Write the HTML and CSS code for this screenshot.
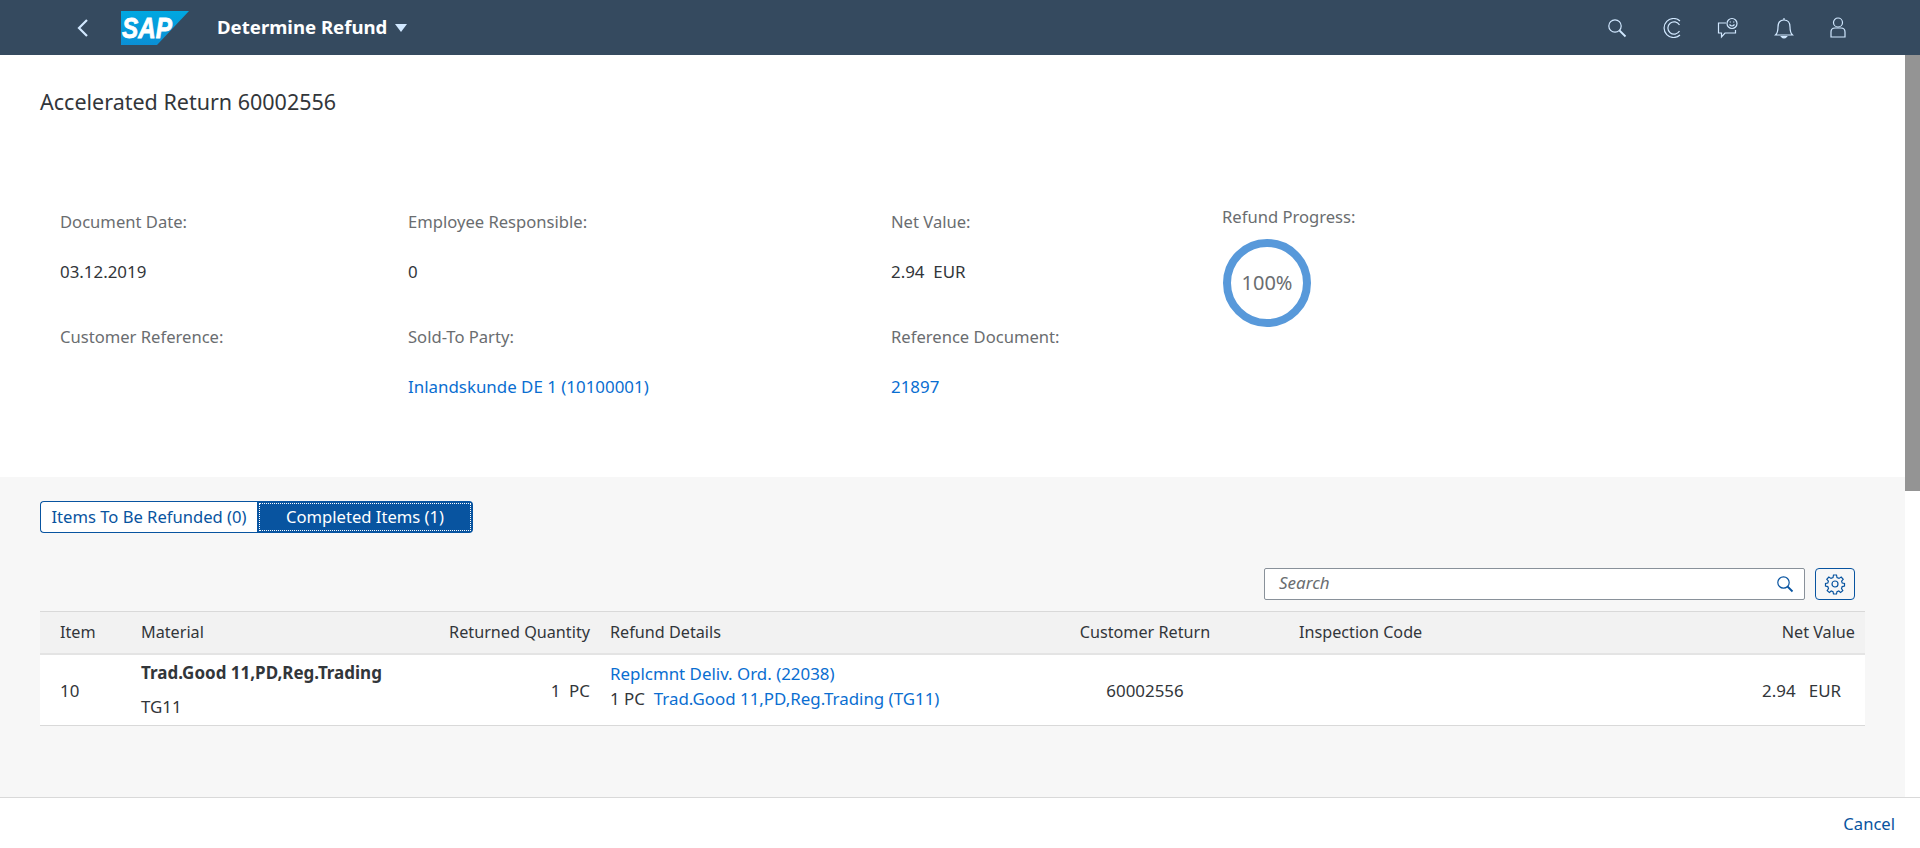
FILE: index.html
```html
<!DOCTYPE html>
<html lang="en">
<head>
    <meta charset="UTF-8">
    <meta name="viewport" content="width=device-width, initial-scale=1.0">
    <title>Determine Refund</title>
    <link rel="stylesheet" href="styles.css">
</head>
<body>

    <header class="shell">
        <button class="back" aria-label="Back">
            <svg width="14" height="20" viewBox="0 0 14 20"><path d="M12 2 L4 10 L12 18" fill="none" stroke="#d1e8ff" stroke-width="2.2"/></svg>
        </button>
        <svg class="logo" width="69" height="34" viewBox="0 0 69 34">
            <defs>
                <linearGradient id="sapBlue" x1="0" y1="0" x2="0" y2="1">
                    <stop offset="0" stop-color="#00a8e1"/>
                    <stop offset="1" stop-color="#0a8fd6"/>
                </linearGradient>
            </defs>
            <polygon points="0,0 68,0 36,34 0,34" fill="url(#sapBlue)"/>
            <text x="1" y="27" class="logo-text" textLength="50" lengthAdjust="spacingAndGlyphs">SAP</text>
        </svg>
        <div class="app-title">Determine Refund</div>
        <span class="title-arrow"></span>
        <div class="shell-icons">
            <svg width="20" height="20" viewBox="0 0 20 20" fill="none" stroke="#d1e8ff" stroke-width="1.2"><circle cx="8" cy="8" r="6.2"/><path d="M12.500 12.500 L18.500 18.500" stroke-width="1.800"/></svg>
            <svg width="20" height="20" viewBox="0 0 20 20" fill="none" stroke="#d1e8ff" stroke-width="1.2"><path d="M18 3 A9.500 9.500 0 1 0 18 17"/><path d="M17.500 7 A6.200 6.200 0 1 0 17.500 13"/></svg>
            <svg width="22" height="22" viewBox="0 0 22 22" fill="none" stroke="#d1e8ff" stroke-width="1.200"><path d="M9 6 H1.500 V16 H4.500 V20 L8 16 H18.500 V13"/><circle cx="15" cy="6.500" r="5"/><path d="M12.500 7.500 Q15 10.500 17.500 7.500"/><path d="M13.300 4.500 v1 M16.700 4.500 v1"/></svg>
            <svg width="20" height="22" viewBox="0 0 20 22" fill="none" stroke="#d1e8ff" stroke-width="1.200"><path d="M1.500 18 Q4 15.500 4 10 Q4 3 10 3 Q16 3 16 10 Q16 15.500 18.500 18 Z"/><path d="M10 1 v2"/><path d="M7.500 19.500 Q10 22.500 12.500 19.500 Z" fill="#d1e8ff"/></svg>
            <svg width="18" height="21" viewBox="0 0 18 21" fill="none" stroke="#d1e8ff" stroke-width="1.200"><circle cx="9" cy="5.500" r="4.500"/><path d="M2 20 V15 Q2 11 6 11 H12 Q16 11 16 15 V20 Z"/></svg>
        </div>
    </header>

    <div class="page">
        <div class="content">
            <main class="main">
                <h1 class="doc-title">Accelerated Return 60002556</h1>

                <section class="info">
                    <div class="info-grid">
                        <div class="label">Document Date:</div>
                        <div class="label">Employee Responsible:</div>
                        <div class="label">Net Value:</div>
                        <div class="value">03.12.2019</div>
                        <div class="value">0</div>
                        <div class="value">2.94&nbsp; EUR</div>
                        <div class="label">Customer Reference:</div>
                        <div class="label">Sold-To Party:</div>
                        <div class="label">Reference Document:</div>
                        <div class="value"></div>
                        <div class="value"><a href="#">Inlandskunde DE 1 (10100001)</a></div>
                        <div class="value"><a href="#">21897</a></div>
                    </div>
                    <div class="progress">
                        <div class="label">Refund Progress:</div>
                        <div class="ring">100%</div>
                    </div>
                </section>

                <section class="items">
                    <div class="tabs">
                        <button class="tab">Items To Be Refunded (0)</button>
                        <button class="tab tab-active"><span class="tab-focus">Completed Items (1)</span></button>
                    </div>

                    <div class="toolbar">
                        <div class="search">
                            <span class="search-text">Search</span>
                            <svg width="18" height="18" viewBox="0 0 18 18" fill="none" stroke="#0854a0" stroke-width="1.2"><circle cx="7.500" cy="7.500" r="5.700"/><path d="M11.500 11.500 L16.500 16.500" stroke-width="1.800"/></svg>
                        </div>
                        <button class="settings" aria-label="Settings">
                            <svg width="22" height="22" viewBox="0 0 22 22" fill="none" stroke="#0854a0" stroke-width="1.200"><circle cx="11" cy="11" r="3"/><path d="M9.500 2 H12.500 L13 4.500 L15 5.400 L17.200 4 L19.200 6.300 L17.600 8.200 L18.200 10 L20.500 10.500 V13 L18.200 13.600 L17.500 15.500 L18.800 17.700 L16.600 19.500 L14.800 18 L13 18.700 L12.500 21 H9.500 L9 18.700 L7.200 18 L5.400 19.500 L3.200 17.700 L4.500 15.500 L3.800 13.600 L1.500 13 V10.500 L3.800 10 L4.400 8.200 L2.800 6.300 L4.800 4 L7 5.400 L9 4.500 Z"/></svg>
                        </button>
                    </div>

                    <div class="table">
                        <div class="row row-head">
                            <div class="cell">Item</div>
                            <div class="cell">Material</div>
                            <div class="cell cell-right">Returned Quantity</div>
                            <div class="cell">Refund Details</div>
                            <div class="cell cell-center">Customer Return</div>
                            <div class="cell cell-inspect">Inspection Code</div>
                            <div class="cell cell-right">Net Value</div>
                        </div>
                        <div class="row row-item">
                            <div class="cell">10</div>
                            <div class="cell cell-stack">
                                <strong>Trad.Good 11,PD,Reg.Trading</strong>
                                <span>TG11</span>
                            </div>
                            <div class="cell cell-right">1&nbsp;&nbsp;PC</div>
                            <div class="cell cell-lines">
                                <a href="#">Replcmnt Deliv. Ord. (22038)</a>
                                <span>1 PC&nbsp; <a href="#">Trad.Good 11,PD,Reg.Trading (TG11)</a></span>
                            </div>
                            <div class="cell cell-center">60002556</div>
                            <div class="cell"></div>
                            <div class="cell cell-right cell-net">2.94&nbsp;&nbsp; EUR</div>
                        </div>
                    </div>
                </section>
            </main>
            <div class="scrollbar"><div class="thumb"></div></div>
        </div>

        <footer class="footer">
            <a href="#" class="cancel">Cancel</a>
        </footer>
    </div>

</body>
</html>
```

FILE: styles.css
```css
* {
    box-sizing: border-box;
}

html, body {
    height: 100%;
}

body {
    margin: 0;
    font-family: "Noto Sans", "Open Sans", sans-serif;
    font-size: 16.6px;
    color: #32363a;
    background-color: #fff;
    display: flex;
    flex-direction: column;
    overflow: hidden;
}

a {
    color: #0a6ed1;
    text-decoration: none;
}

button {
    font-family: inherit;
    background: none;
    border: none;
    padding: 0;
}

/* shell bar */
.shell {
    height: 55px;
    flex: none;
    background-color: #354a5f;
    display: flex;
    align-items: center;
    padding-left: 75px;
}

.back {
    width: 14px;
    height: 20px;
    margin-right: 32px;
}

.logo {
    margin-right: 27px;
}

.logo-text {
    font-family: "Liberation Sans", sans-serif;
    font-weight: 700;
    font-style: italic;
    font-size: 29px;
    fill: #fff;
    stroke: #fff;
    stroke-width: 0.8px;
}

.app-title {
    font-size: 18.6px;
    font-weight: 700;
    color: #fff;
    padding-bottom: 2px;
}

.title-arrow {
    margin-left: 8px;
    border-left: 6.5px solid transparent;
    border-right: 6.5px solid transparent;
    border-top: 8px solid #d1e8ff;
}

.shell-icons {
    margin-left: auto;
    display: flex;
    align-items: center;
    gap: 35px;
    padding-right: 73px;
}

/* main layout */
.page {
    flex: 1;
    display: flex;
    flex-direction: column;
    min-height: 0;
}

.content {
    flex: 1;
    display: flex;
    min-height: 0;
}

.main {
    flex: 1;
    min-width: 0;
    display: flex;
    flex-direction: column;
}

.scrollbar {
    width: 15px;
    flex: none;
    background-color: #fff;
}

.thumb {
    height: 436px;
    background-color: #949494;
}

.doc-title {
    margin: 0;
    padding: 33px 0 0 40px;
    height: 130px;
    font-size: 21.5px;
    line-height: 28px;
    font-weight: 400;
}

/* header form */
.info {
    height: 292px;
    display: flex;
    padding-left: 60px;
}

.info-grid {
    width: 1162px;
    display: grid;
    grid-template-columns: 348px 483px 331px;
    grid-template-rows: 50px 65px 50px 50px;
    padding-top: 25px;
    line-height: 24px;
}

.label {
    color: #6a6d70;
}

.value {
    font-size: 16.9px;
}

.progress {
    padding-top: 20px;
}

.ring {
    margin: 11px 0 0 1px;
    width: 88px;
    height: 88px;
    border: 8px solid #5899da;
    border-radius: 50%;
    display: flex;
    align-items: center;
    justify-content: center;
    padding-bottom: 2px;
    font-size: 20px;
    color: #6a6d70;
}

/* lower section */
.items {
    flex: 1;
    background-color: #f7f7f7;
    padding: 24px 40px 0;
}

.tabs {
    display: flex;
    width: 433px;
    height: 32px;
}

.tab {
    width: 217px;
    border: 1px solid #0854a0;
    border-right: none;
    border-radius: 4px 0 0 4px;
    background-color: #fff;
    color: #0854a0;
    font-size: 16.6px;
    white-space: nowrap;
    padding-bottom: 2px;
}

.tab-active {
    width: 216px;
    border: none;
    border-radius: 0 4px 4px 0;
    background-color: #0854a0;
    color: #fff;
    padding: 2px;
}

.tab-focus {
    display: flex;
    height: 100%;
    align-items: center;
    justify-content: center;
    border: 1px dotted #fff;
    padding-bottom: 2px;
}

.toolbar {
    margin-top: 35px;
    display: flex;
    justify-content: flex-end;
    gap: 10px;
    padding-right: 10px;
}

.search {
    width: 541px;
    height: 32px;
    background-color: #fff;
    border: 1px solid #89919a;
    border-radius: 2px;
    display: flex;
    align-items: center;
    justify-content: space-between;
    padding: 0 10px 0 14px;
}

.search-text {
    font-style: italic;
    color: #6a6d70;
    font-size: 17px;
    padding-bottom: 4px;
}

.settings {
    width: 40px;
    height: 32px;
    border: 1px solid #0854a0;
    border-radius: 4px;
    display: flex;
    align-items: center;
    justify-content: center;
}

/* table */
.table {
    margin-top: 11px;
    border-top: 1px solid #d9d9d9;
}

.row {
    display: grid;
    grid-template-columns: 101px 229px 240px 450px 170px 526px 99px;
    align-items: center;
    padding-right: 10px;
}

.cell:first-child {
    padding-left: 20px;
}

.cell:nth-child(3) {
    padding-right: 20px;
}

.row-head {
    height: 43px;
    background-color: #f2f2f2;
    border-bottom: 2px solid #e4e4e4;
    color: #32363a;
    font-size: 16.2px;
    padding-bottom: 2px;
}

.row-item {
    height: 71px;
    background-color: #fff;
    border-bottom: 1px solid #d9d9d9;
    font-size: 16.9px;
}

.cell {
    white-space: nowrap;
}

.cell-right {
    display: flex;
    justify-content: flex-end;
}

.cell-center {
    text-align: center;
}

.cell-inspect {
    padding-left: 69px;
}

.cell-stack {
    display: flex;
    flex-direction: column;
    gap: 12px;
    line-height: 22px;
}

.cell-stack strong {
    font-size: 17px;
}

.cell-lines {
    display: flex;
    flex-direction: column;
    gap: 2px;
    line-height: 23px;
    padding-bottom: 8px;
}

.cell-net {
    padding-right: 14px;
}

/* footer */
.footer {
    flex: none;
    height: 51px;
    border-top: 1px solid #d9d9d9;
    display: flex;
    align-items: center;
    justify-content: flex-end;
    padding: 1px 25px 0 0;
}

.cancel {
    color: #0854a0;
}
```
